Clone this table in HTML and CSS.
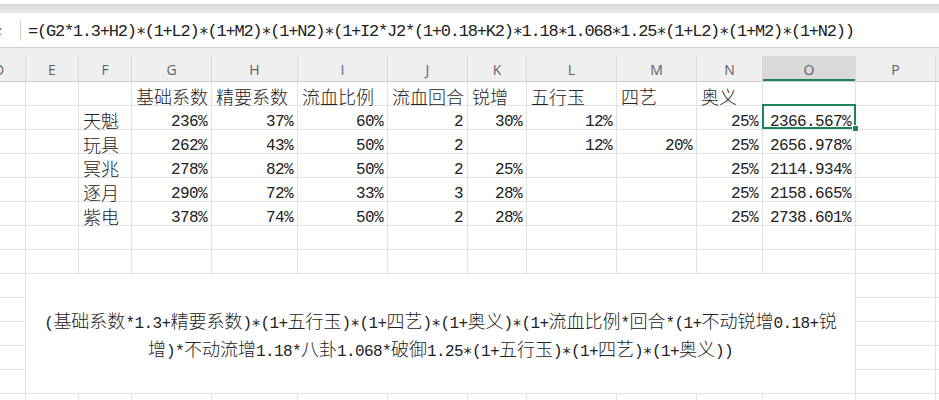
FILE: index.html
```html
<!DOCTYPE html>
<html lang="zh">
<head>
<meta charset="utf-8">
<title>Sheet</title>
<link rel="stylesheet" href="styles.css">
</head>
<body>
<div class="top"></div>
<div class="fbar"><span class="fx">x</span><span class="sep"></span><span class="formula">=(G2*1.3+H2)∗(1+L2)∗(1+M2)∗(1+N2)∗(1+I2*J2*(1+0.18+K2)∗1.18∗1.068∗1.25∗(1+L2)∗(1+M2)∗(1+N2))</span></div>
<div class="gap"></div>
<div class="sheet">
  <div class="h">D</div><div class="h">E</div><div class="h">F</div><div class="h">G</div><div class="h">H</div><div class="h">I</div><div class="h">J</div><div class="h">K</div><div class="h">L</div><div class="h">M</div><div class="h">N</div><div class="h o">O</div><div class="h">P</div><div class="h"></div>

  <div></div><div></div><div></div><div>基础系数</div><div>精要系数</div><div>流血比例</div><div>流血回合</div><div>锐增</div><div>五行玉</div><div>四艺</div><div>奥义</div><div></div><div></div><div></div>

  <div></div><div></div><div>天魁</div><div class="n">236%</div><div class="n">37%</div><div class="n">60%</div><div class="n">2</div><div class="n">30%</div><div class="n">12%</div><div class="n"></div><div class="n">25%</div><div class="n sel">2366.567%<span class="cur"></span><span class="handle"></span></div><div></div><div></div>

  <div></div><div></div><div>玩具</div><div class="n">262%</div><div class="n">43%</div><div class="n">50%</div><div class="n">2</div><div class="n"></div><div class="n">12%</div><div class="n">20%</div><div class="n">25%</div><div class="n">2656.978%</div><div></div><div></div>

  <div></div><div></div><div>冥兆</div><div class="n">278%</div><div class="n">82%</div><div class="n">50%</div><div class="n">2</div><div class="n">25%</div><div class="n"></div><div class="n"></div><div class="n">25%</div><div class="n">2114.934%</div><div></div><div></div>

  <div></div><div></div><div>逐月</div><div class="n">290%</div><div class="n">72%</div><div class="n">33%</div><div class="n">3</div><div class="n">28%</div><div class="n"></div><div class="n"></div><div class="n">25%</div><div class="n">2158.665%</div><div></div><div></div>

  <div></div><div></div><div>紫电</div><div class="n">378%</div><div class="n">74%</div><div class="n">50%</div><div class="n">2</div><div class="n">28%</div><div class="n"></div><div class="n"></div><div class="n">25%</div><div class="n">2738.601%</div><div></div><div></div>

  <div></div><div></div><div></div><div></div><div></div><div></div><div></div><div></div><div></div><div></div><div></div><div></div><div></div><div></div>
  <div></div><div></div><div></div><div></div><div></div><div></div><div></div><div></div><div></div><div></div><div></div><div></div><div></div><div></div>

  <div class="m">
    <div class="line"><span class="a">(</span>基础系数<span class="a">*1.3+</span>精要系数<span class="a">)∗(1+</span>五行玉<span class="a">)∗(1+</span>四艺<span class="a">)∗(1+</span>奥义<span class="a">)∗(1+</span>流血比例<span class="a">*</span>回合<span class="a">*(1+</span>不动锐增<span class="a">0.18+</span>锐</div>
    <div class="line">增<span class="a">)*</span>不动流增<span class="a">1.18*</span>八卦<span class="a">1.068*</span>破御<span class="a">1.25∗(1+</span>五行玉<span class="a">)∗(1+</span>四艺<span class="a">)∗(1+</span>奥义<span class="a">))</span></div>
  </div>
  <div></div><div></div><div></div>
  <div></div><div></div><div></div>
  <div></div><div></div><div></div>
  <div></div><div></div><div></div>
  <div></div><div></div><div></div>

  <div></div><div></div><div></div><div></div><div></div><div></div><div></div><div></div><div></div><div></div><div></div><div></div><div></div><div></div>
</div>
</body>
</html>
```

FILE: styles.css
```css
body {
  margin: 0;
  background: #fff;
  overflow: hidden;
  font-family: "Noto Sans CJK SC", sans-serif;
}

.top {
  height: 13px;
  background: linear-gradient(#fff 0, #fff 4px, #dadada 4px, #ebebeb 13px);
}

.fbar {
  height: 35px;
  box-sizing: border-box;
  border-bottom: 1px solid #cfcfcf;
  display: flex;
  align-items: center;
  background: #fff;
}

.fx {
  font: italic 15px "Liberation Serif", serif;
  color: #444;
  margin-left: -5px;
  width: 9px;
}

.sep {
  width: 1px;
  height: 21px;
  background: #d0d0d0;
  margin-left: 16px;
}

.formula {
  margin-left: 7px;
  font-family: "Liberation Mono", "DejaVu Sans Mono", monospace;
  font-size: 17px;
  letter-spacing: -1.23px;
  color: #222;
  white-space: nowrap;
}

.gap {
  height: 8px;
  background: #efefef;
}

.sheet {
  display: grid;
  grid-template-columns: 53px 53px 53px 80px 86px 90px 80px 59px 90px 80px 66px 93px 80px 60px;
  grid-template-rows: 26px;
  grid-auto-rows: 24px;
  margin-left: -27px;
}

.sheet > div {
  box-sizing: border-box;
  border-right: 1px solid #e2e2e2;
  border-bottom: 1px solid #e2e2e2;
  display: flex;
  align-items: flex-end;
  padding: 0 4px;
  font-size: 18px;
  font-weight: 300;
  line-height: 18px;
  color: #222;
  white-space: nowrap;
  min-width: 0;
}

.sheet > .h {
  background: #efefef;
  border-right-color: #d9d9d9;
  border-bottom-color: #cfcfcf;
  justify-content: center;
  align-items: center;
  font: 14px "Open Sans", sans-serif;
  color: #5f5f5f;
  padding-top: 2px;
}

.sheet > .h.o {
  background: #d9d9d9;
  box-shadow: inset 0 -2px #1f8558;
}

.sheet > .n {
  justify-content: flex-end;
  font-family: "Liberation Mono", "DejaVu Sans Mono", monospace;
  font-size: 16px;
  font-weight: 400;
  letter-spacing: -0.6px;
  line-height: 14px;
}

.sheet > .sel {
  position: relative;
}

.cur {
  position: absolute;
  left: -1px;
  right: -1px;
  top: -2px;
  bottom: 0;
  border: 2px solid #1f8558;
}

.handle {
  position: absolute;
  left: 90px;
  top: 20px;
  width: 5px;
  height: 5px;
  background: #1f8558;
  box-shadow: 0 0 0 1px #fff;
}

.sheet > .m {
  grid-column: 2 / 13;
  grid-row: 10 / 15;
  flex-direction: column;
  align-items: center;
  justify-content: center;
  padding-top: 4px;
  line-height: 24px;
  background: #fff;
}

.line {
  white-space: nowrap;
}

.a {
  font-family: "Liberation Mono", "DejaVu Sans Mono", monospace;
  font-size: 16px;
  font-weight: 400;
  letter-spacing: -0.6px;
}
```
